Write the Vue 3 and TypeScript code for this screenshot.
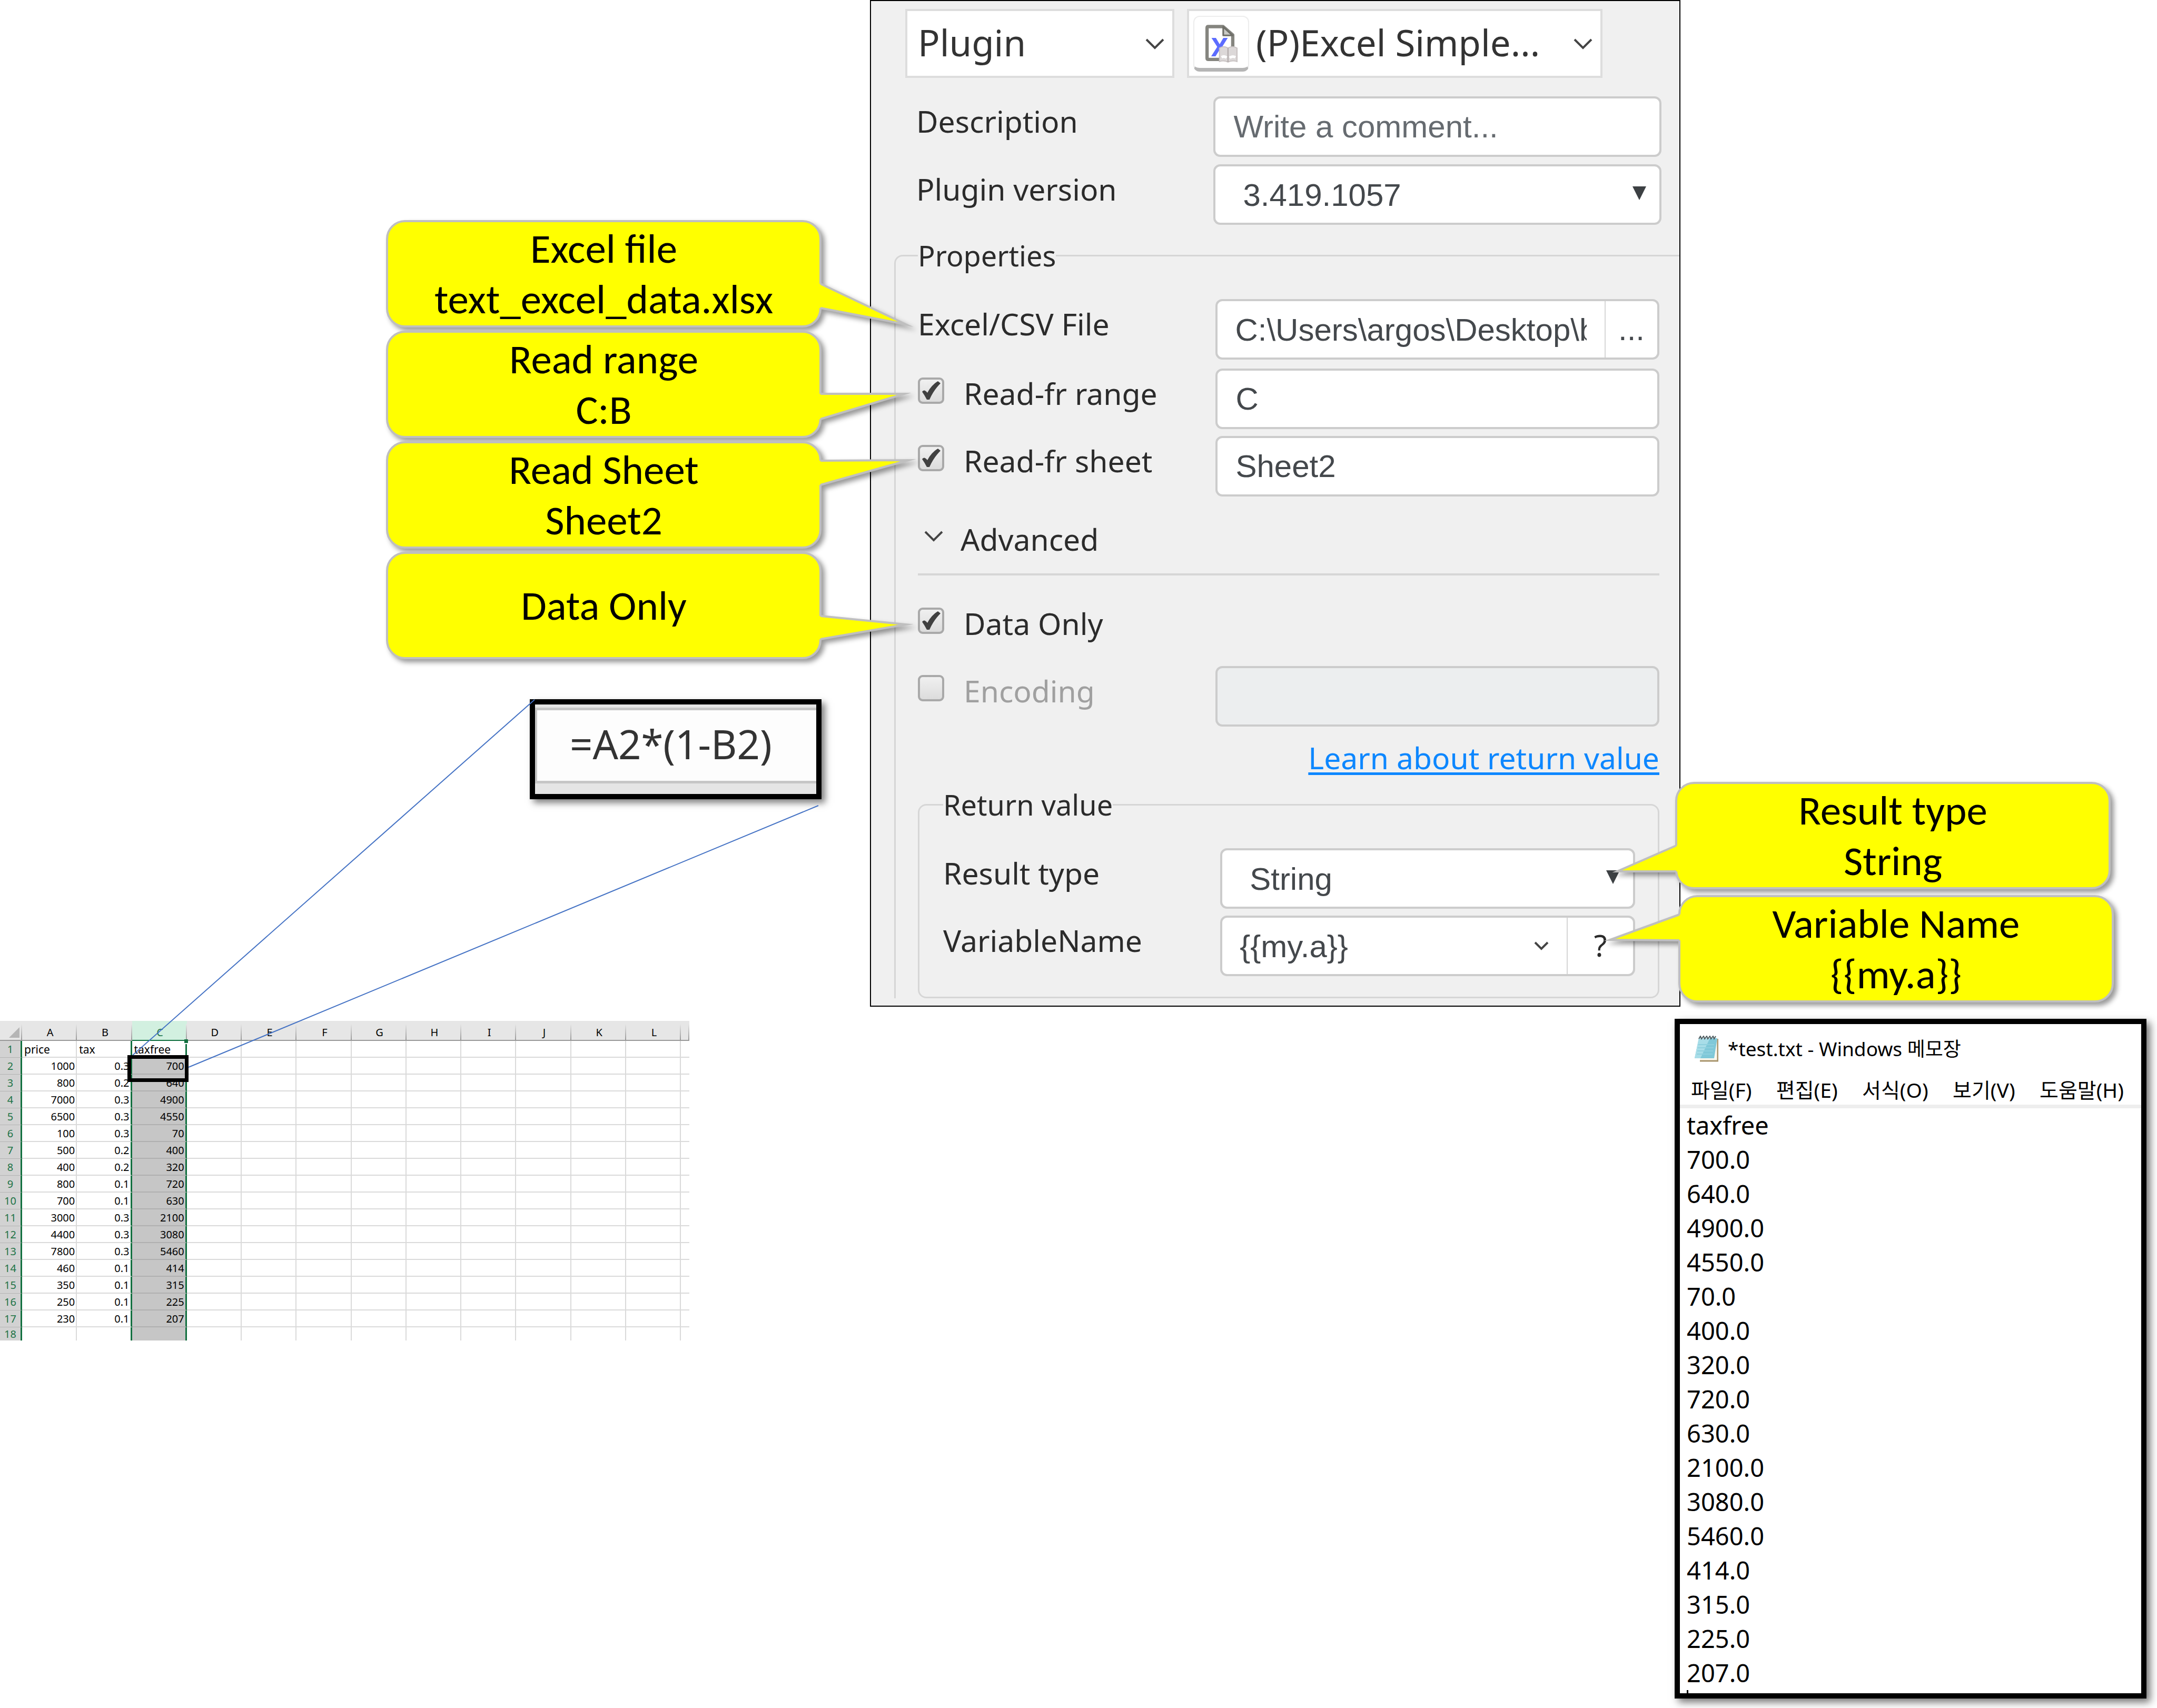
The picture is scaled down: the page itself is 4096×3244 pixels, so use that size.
<script setup lang="ts">
import { ref } from 'vue'

interface Tail {
  from: number
  to: number
  tipX: number
  tipY: number
}

interface Callout {
  lines: string[]
  tail: Tail
}

const leftCallouts: Callout[] = [
  { lines: ['Excel file', 'text_excel_data.xlsx'], tail: { from: 117, to: 163, tipX: 164, tipY: 194 } },
  { lines: ['Read range', 'C:B'], tail: { from: 116, to: 164, tipX: 161, tipY: 116 } },
  { lines: ['Read Sheet', 'Sheet2'], tail: { from: 33, to: 79, tipX: 169, tipY: 32 } },
  { lines: ['Data Only'], tail: { from: 118, to: 162, tipX: 164, tipY: 134 } },
]

const rightCallouts: Callout[] = [
  { lines: ['Result type', 'String'], tail: { from: 117, to: 166, tipX: -114, tipY: 166 } },
  { lines: ['Variable Name', '{{my.a}}'], tail: { from: 33, to: 82, tipX: -134, tipY: 81 } },
]

// The pointer starts on the middle of the body's 4px border.
function tailStroke(t: Tail): string {
  const edge = t.tipX > 0 ? 2 : -2
  return `M${edge} ${t.from} L${t.tipX} ${t.tipY} L${edge} ${t.to}`
}

function tailFill(t: Tail): string {
  const edge = t.tipX > 0 ? 2 : -2
  return `M0 ${t.from} L${edge} ${t.from} L${t.tipX} ${t.tipY} L${edge} ${t.to} L0 ${t.to} Z`
}

const description = ref('')
const filePath = ref('C:\\Users\\argos\\Desktop\\b')
const readRange = ref('C')
const readSheet = ref('Sheet2')
const useRange = ref(true)
const useSheet = ref(true)
const dataOnly = ref(true)
const useEncoding = ref(false)
const variable = ref('{{my.a}}')
const formula = ref('=A2*(1-B2)')

const columns = ['A', 'B', 'C', 'D', 'E', 'F', 'G', 'H', 'I', 'J', 'K', 'L', '']
const sheetRows: string[][] = [
  ['price', 'tax', 'taxfree'],
  ['1000', '0.3', '700'],
  ['800', '0.2', '640'],
  ['7000', '0.3', '4900'],
  ['6500', '0.3', '4550'],
  ['100', '0.3', '70'],
  ['500', '0.2', '400'],
  ['400', '0.2', '320'],
  ['800', '0.1', '720'],
  ['700', '0.1', '630'],
  ['3000', '0.3', '2100'],
  ['4400', '0.3', '3080'],
  ['7800', '0.3', '5460'],
  ['460', '0.1', '414'],
  ['350', '0.1', '315'],
  ['250', '0.1', '225'],
  ['230', '0.1', '207'],
  [],
]

const menus = ['파일(F)', '편집(E)', '서식(O)', '보기(V)', '도움말(H)']
const noteText = ref(
  sheetRows
    .filter((row) => row.length > 0)
    .map((row, i) => (i === 0 ? row[2] : `${row[2]}.0`))
    .join('\n'),
)
</script>

<template>
  <main class="page">
    <div class="upper">
      <section class="left-notes">
        <div v-for="c in leftCallouts" :key="c.lines[0]" class="callout">
          <span v-for="line in c.lines" :key="line">{{ line }}</span>
          <svg class="tail tail-right" width="1" height="1" aria-hidden="true">
            <path :d="tailFill(c.tail)" fill="#ffff00" />
            <path :d="tailStroke(c.tail)" fill="none" stroke="#bfbfbf" stroke-width="4" stroke-miterlimit="20" />
          </svg>
        </div>
        <div class="formula">
          <input v-model="formula" class="formula-input" aria-label="Formula" />
        </div>
      </section>

      <form class="panel" @submit.prevent>
        <div class="head">
          <div class="head-type">
            <select class="head-select" aria-label="Operation type">
              <option>Plugin</option>
            </select>
            <svg class="head-chevron" viewBox="0 0 36 22" aria-hidden="true"><path d="M2 3 L18 19 L34 3" /></svg>
          </div>
          <div class="head-plugin">
            <span class="plugin-icon">
              <svg viewBox="0 0 450 456" aria-hidden="true">
                <path d="M322 250 V152 L240 82 H116 Q106 82 106 94 V346 Q106 358 118 358 H215" fill="none" stroke="#85857f" stroke-width="28" stroke-linejoin="round" />
                <path d="M242 84 V156 H320 Z" fill="#c9c9c5" stroke="#6e6e68" stroke-width="14" stroke-linejoin="round" />
                <text x="140" y="332" font-family="'Noto Sans', sans-serif" font-weight="700" font-size="216" fill="#5c6cff">X</text>
                <path d="M210 262 Q245 240 282 262 Q320 240 358 262 V376 Q320 362 282 380 Q245 362 210 376 Z" fill="#dcd8d8" stroke="#c4bebe" stroke-width="8" />
                <path d="M282 262 V380" stroke="#b2acac" stroke-width="10" />
                <path d="M228 340 Q250 326 270 344 M296 344 Q320 326 344 340" fill="none" stroke="#ffffff" stroke-width="22" />
              </svg>
            </span>
            <select class="head-select" aria-label="Plugin">
              <option>(P)Excel Simple...</option>
            </select>
            <svg class="head-chevron" viewBox="0 0 36 22" aria-hidden="true"><path d="M2 3 L18 19 L34 3" /></svg>
          </div>
        </div>

        <div class="general">
          <div class="row">
            <label class="label" for="description">Description</label>
            <input id="description" v-model="description" class="field" placeholder="Write a comment..." />
          </div>
          <div class="row">
            <label class="label" for="version">Plugin version</label>
            <div class="select-wrap">
              <select id="version" class="field select">
                <option>3.419.1057</option>
              </select>
              <svg class="triangle" viewBox="0 0 26 26" aria-hidden="true"><path d="M0 0 H26 L13 26 Z" /></svg>
            </div>
          </div>
        </div>

        <fieldset class="properties">
          <legend>Properties</legend>
          <div class="row file-row">
            <label class="label" for="file">Excel/CSV File</label>
            <div class="group">
              <input id="file" v-model="filePath" class="group-input" />
              <button type="button" class="browse" aria-label="Browse">...</button>
            </div>
          </div>
          <div class="row">
            <label class="label check-label">
              <span class="check">
                <input v-model="useRange" type="checkbox" />
                <svg v-if="useRange" viewBox="0 0 50 50" aria-hidden="true"><path d="M8 27 Q12 21 18 29 Q26 14 38 7 L43 11 Q30 24 22 42 H17 Q13 34 8 27 Z" /></svg>
              </span>
              Read-fr range
            </label>
            <input v-model="readRange" class="field" aria-label="Range" />
          </div>
          <div class="row">
            <label class="label check-label">
              <span class="check">
                <input v-model="useSheet" type="checkbox" />
                <svg v-if="useSheet" viewBox="0 0 50 50" aria-hidden="true"><path d="M8 27 Q12 21 18 29 Q26 14 38 7 L43 11 Q30 24 22 42 H17 Q13 34 8 27 Z" /></svg>
              </span>
              Read-fr sheet
            </label>
            <input v-model="readSheet" class="field" aria-label="Sheet" />
          </div>

          <button type="button" class="advanced">
            <svg viewBox="0 0 36 22" aria-hidden="true"><path d="M2 2 L18 18 L34 2" /></svg>
            Advanced
          </button>

          <div class="row">
            <label class="label check-label">
              <span class="check">
                <input v-model="dataOnly" type="checkbox" />
                <svg v-if="dataOnly" viewBox="0 0 50 50" aria-hidden="true"><path d="M8 27 Q12 21 18 29 Q26 14 38 7 L43 11 Q30 24 22 42 H17 Q13 34 8 27 Z" /></svg>
              </span>
              Data Only
            </label>
          </div>
          <div class="row">
            <label class="label check-label muted">
              <span class="check"><input v-model="useEncoding" type="checkbox" /></span>
              Encoding
            </label>
            <input class="field" aria-label="Encoding" disabled />
          </div>

          <div class="learn"><a href="#return-value">Learn about return value</a></div>

          <fieldset id="return-value" class="return">
            <legend>Return value</legend>
            <div class="row return-row">
              <label class="label" for="result">Result type</label>
              <div class="select-wrap">
                <select id="result" class="field select">
                  <option>String</option>
                </select>
                <svg class="triangle" viewBox="0 0 26 26" aria-hidden="true"><path d="M0 0 H26 L13 26 Z" /></svg>
              </div>
            </div>
            <div class="row return-row">
              <label class="label" for="variable">VariableName</label>
              <div class="group">
                <input id="variable" v-model="variable" class="group-input" />
                <svg class="small-chevron" viewBox="0 0 28 18" aria-hidden="true"><path d="M2 2 L14 14 L26 2" /></svg>
                <button type="button" class="help" aria-label="Help">?</button>
              </div>
            </div>
          </fieldset>
        </fieldset>
      </form>

      <section class="right-notes">
        <div v-for="c in rightCallouts" :key="c.lines[0]" class="callout">
          <span v-for="line in c.lines" :key="line">{{ line }}</span>
          <svg class="tail tail-left" width="1" height="1" aria-hidden="true">
            <path :d="tailFill(c.tail)" fill="#ffff00" />
            <path :d="tailStroke(c.tail)" fill="none" stroke="#bfbfbf" stroke-width="4" stroke-miterlimit="20" />
          </svg>
        </div>
      </section>
    </div>

    <div class="lower">
      <table class="sheet">
        <colgroup>
          <col class="col-index" />
          <col v-for="n in 12" :key="n" />
          <col class="col-rest" />
        </colgroup>
        <thead>
          <tr>
            <th class="corner"><svg viewBox="0 0 20 20" aria-hidden="true"><path d="M20 0 V20 H0 Z" /></svg></th>
            <th v-for="name in columns" :key="name" :class="{ picked: name === 'C' }">{{ name }}</th>
          </tr>
        </thead>
        <tbody>
          <tr v-for="(row, r) in sheetRows" :key="r">
            <th>{{ r + 1 }}</th>
            <td v-for="(name, c) in columns" :key="name" :class="{ picked: name === 'C' }">
              {{ row[c] ?? '' }}
              <span v-if="r === 0 && c === 2" class="handle"></span>
              <span v-if="r === 1 && c === 2" class="focus-box"></span>
            </td>
          </tr>
        </tbody>
      </table>

      <section class="notepad">
        <header class="title">
          <svg viewBox="0 0 46 50" aria-hidden="true">
            <path d="M12 6 H46 V48 H11 V42 Z" fill="#fbf8ee" />
            <path d="M45 6 V48 H11" fill="none" stroke="#a8946c" stroke-width="3" />
            <path d="M9 5 H44 L38 43 H1 Z" fill="#7fc8d8" />
            <path d="M9 5 H30 L12 43 H1 Z" fill="#a8dde8" />
            <path d="M8 17 H38 M7 23 H37 M6 29 H36 M5 35 H35" stroke="#8fd0de" stroke-width="2" />
            <path d="M9 6 L12 1 L14 6 L18 1 L20 6 L24 1 L26 6 L30 1 L32 6 L36 1 L38 6 L41 1" fill="none" stroke="#4c5a5e" stroke-width="2" />
          </svg>
          <h2>*test.txt - Windows 메모장</h2>
        </header>
        <nav class="menu">
          <button v-for="m in menus" :key="m" type="button">{{ m }}</button>
        </nav>
        <textarea v-model="noteText" rows="17" aria-label="Text" spellcheck="false"></textarea>
        <span class="caret"></span>
      </section>
    </div>

    <svg class="lines" viewBox="0 0 4096 3244" preserveAspectRatio="none" aria-hidden="true">
      <path d="M1015 1329 L252 2004 M1554 1530 L358 2027" fill="none" stroke="#4472c4" stroke-width="2" />
    </svg>
  </main>
</template>

<style>
body {
  margin: 0;
  background: #ffffff;
}
</style>

<style scoped>
.page {
  position: relative;
  min-height: 100vh;
  box-sizing: border-box;
  overflow: hidden;
  background: #ffffff;
  font-family: 'Noto Sans', 'Noto Sans CJK KR', sans-serif;
  color: #000000;
}

.page *,
.page *::before {
  box-sizing: border-box;
}

button,
input,
select,
textarea {
  margin: 0;
  padding: 0;
  border: 0;
  border-radius: 0;
  outline: 0;
  background: transparent;
  color: inherit;
  font: inherit;
  appearance: none;
}

.upper {
  display: grid;
  grid-template-columns:
    minmax(0, 733fr) minmax(0, 827fr) minmax(0, 92fr) minmax(0, 1539fr)
    minmax(0, 827fr) minmax(0, 78fr);
}

/* callouts */
.left-notes {
  grid-column: 2;
  z-index: 2;
  display: flex;
  flex-direction: column;
  gap: 6px;
  padding-top: 418px;
}

.right-notes {
  grid-column: 5;
  z-index: 2;
  display: flex;
  flex-direction: column;
  gap: 11px;
  padding-top: 1485px;
}

.right-notes .callout {
  margin: 0 10px 0 -10px;
}

.right-notes .callout + .callout {
  margin: 0 4px 0 -4px;
}

.callout {
  position: relative;
  display: flex;
  flex-direction: column;
  align-items: center;
  justify-content: center;
  min-height: 204px;
  border: 4px solid #bfbfbf;
  border-radius: 36px;
  background: #ffff00;
  font-family: Carlito, Lato, sans-serif;
  font-size: 79px;
  line-height: 96px;
  white-space: nowrap;
  filter: drop-shadow(6px 6px 5px rgba(0, 0, 0, 0.4));
}

.tail {
  position: absolute;
  top: 0;
  overflow: visible;
}

.tail-right {
  left: 100%;
}

.tail-left {
  left: 0;
}

.formula {
  align-self: flex-end;
  width: 67%;
  margin-top: 70px;
  padding: 6px 0 20px;
  border: 10px solid #000000;
  background: #e5e5e5;
  box-shadow: 7px 7px 12px rgba(0, 0, 0, 0.5);
}

.formula-input {
  display: block;
  width: 100%;
  height: 144px;
  padding: 0 0 8px 62px;
  border: solid #c6c6c6;
  border-width: 5px 0 5px 4px;
  background: #fdfdfd;
  color: #333333;
  font-size: 76px;
}

/* properties panel */
.panel {
  grid-column: 4;
  padding-bottom: 14px;
  border: 2px solid #000000;
  background: #f0f0f0;
  color: #2b2b2b;
  font-size: 57px;
}

.head {
  display: grid;
  grid-template-columns: minmax(0, 511fr) minmax(0, 789fr);
  gap: 24px;
  padding: 15px 146px 35px 65px;
}

.head-type,
.head-plugin {
  position: relative;
  display: flex;
  align-items: center;
  height: 131px;
  border: 4px solid #dddddd;
  background: #ffffff;
  color: #333333;
}

.head-plugin {
  padding-left: 8px;
}

.head-select {
  flex: 1;
  min-width: 0;
  height: 123px;
  padding: 0 0 6px 20px;
  font-size: 69px;
}

.head-plugin .head-select {
  padding-left: 13px;
}

.head-chevron {
  position: absolute;
  top: 51px;
  right: 15px;
  width: 36px;
  height: 22px;
}

.head-chevron path,
.advanced path,
.small-chevron path {
  fill: none;
  stroke: #444444;
  stroke-width: 4;
}

.plugin-icon {
  width: 106px;
  height: 106px;
  border: 2px solid #ededed;
  border-bottom: 7px solid #b5b5b5;
  border-radius: 12px;
  background: #ffffff;
}

.plugin-icon svg {
  display: block;
  width: 102px;
  height: 103px;
}

.general {
  display: flex;
  flex-direction: column;
  gap: 14px;
  padding: 0 34px 0 86px;
}

.row {
  display: grid;
  grid-template-columns: minmax(0, 565fr) minmax(0, 842fr);
  align-items: start;
  min-height: 115px;
}

.general .row {
  grid-template-columns: minmax(0, 564fr) minmax(0, 850fr);
}

.return .row {
  grid-template-columns: minmax(0, 525fr) minmax(0, 786fr);
}

.label {
  line-height: 94px;
  white-space: nowrap;
}

.field,
.group {
  width: 100%;
  height: 115px;
  border: 4px solid #cccccc;
  border-radius: 13px;
  background: #ffffff;
  color: #44484c;
  font-family: 'Liberation Sans', Arial, sans-serif;
  font-size: 60px;
}

.field {
  padding: 0 34px;
}

.field::placeholder {
  color: #666b70;
  opacity: 1;
}

.field:disabled {
  background: #eceeef;
}

.select-wrap {
  position: relative;
}

.select {
  padding: 2px 52px 0;
}

.triangle {
  position: absolute;
  top: 42px;
  right: 29px;
  width: 26px;
  height: 26px;
  fill: #3c4043;
}

.group {
  display: flex;
  align-items: center;
}

.group-input {
  flex: 1;
  min-width: 0;
  height: 107px;
  margin-right: 34px;
  padding: 2px 0 0 33px;
}

.browse {
  width: 100px;
  height: 107px;
  border-left: 2px solid #d6d6d6;
}

.help {
  width: 126px;
  height: 107px;
  padding-bottom: 4px;
  border-left: 2px solid #d6d6d6;
  color: #2b2b2b;
  font-family: 'Noto Sans', sans-serif;
  font-size: 57px;
}

.small-chevron {
  width: 28px;
  height: 18px;
  margin-right: 34px;
}

fieldset {
  min-width: 0;
  margin: 0;
  border: 3px solid #d6d6d6;
  border-radius: 16px;
}

legend {
  padding: 0;
  font-size: 54px;
  line-height: 76px;
}

.properties {
  margin: 20px 0 0 44px;
  padding: 45px 38px 0 42px;
  border-right: 0;
  border-bottom: 0;
  border-radius: 16px 0 0 0;
}

.properties .row {
  margin-bottom: 13px;
}

.properties .file-row {
  margin-bottom: 17px;
}

.check-label {
  display: flex;
  align-items: flex-start;
  gap: 37px;
}

.check {
  position: relative;
  width: 50px;
  height: 50px;
  margin-top: 17px;
}

.check input {
  display: block;
  width: 50px;
  height: 50px;
  border: 4px solid #a9a9a9;
  border-radius: 9px;
  background: linear-gradient(#f0f0f0, #dcdcdc);
}

.check svg {
  position: absolute;
  inset: 0;
  fill: #404040;
  pointer-events: none;
}

.muted {
  color: #a0a0a0;
}

.advanced {
  display: flex;
  align-items: center;
  gap: 33px;
  width: 100%;
  margin: -13px 0 44px;
  padding: 43px 12px 27px;
  border-bottom: 4px solid #d6d6d6;
  line-height: 76px;
}

.advanced svg {
  width: 36px;
  height: 22px;
  margin-bottom: 10px;
}

.learn {
  margin-top: 21px;
  line-height: 76px;
  text-align: right;
}

.learn a {
  color: #0d87ff;
  text-decoration-thickness: 5px;
  text-underline-offset: 6px;
}

.return {
  margin-top: 13px;
  padding: 45px 43px 26px 45px;
}

/* spreadsheet */
.lower {
  display: grid;
  grid-template-columns: minmax(0, 1309fr) minmax(0, 1871fr) minmax(0, 896fr) minmax(0, 20fr);
  align-items: start;
  padding: 23px 0 18px;
}

.sheet {
  width: 100%;
  margin-top: 4px;
  table-layout: fixed;
  border-collapse: separate;
  border-spacing: 0;
  font-size: 20px;
  line-height: 24px;
}

.col-index {
  width: 42px;
}

.col-rest {
  width: 16px;
}

.sheet th,
.sheet td {
  height: 32px;
  padding: 1px 2px 0 4px;
  font-weight: 400;
  white-space: nowrap;
}

.sheet thead th {
  height: 38px;
  padding-top: 7px;
  border-bottom: 2px solid #999999;
  background: linear-gradient(#e6e6e6, #999999) right bottom / 2px 30px no-repeat #e6e6e6;
}

.sheet thead .corner {
  padding: 8px 5px 0 0;
  text-align: right;
}

.corner svg {
  display: block;
  width: 20px;
  height: 20px;
  margin-left: auto;
  fill: #b5b5b5;
}

.sheet thead .picked {
  border-bottom-color: #127040;
  background-color: #d2f0e0;
  color: #217346;
}

.sheet tbody th {
  padding: 1px 0 0;
  border-right: 3px solid #127040;
  border-bottom: 1px solid #b4b4b4;
  background: #d2d2d2;
  color: #217346;
}

.sheet td {
  border-right: 2px solid #dadada;
  border-bottom: 2px solid #dadada;
  text-align: right;
}

.sheet td:last-child {
  padding: 0;
  border-right: 0;
}

.sheet td:nth-child(3) {
  border-right: 3px solid #127040;
}

.sheet tbody tr:first-child td {
  font-size: 21px;
  text-align: left;
}

.sheet tbody tr:last-child > * {
  height: 25px;
  border-bottom: 0;
}

.sheet td.picked {
  position: relative;
  border-right: 3px solid #127040;
  border-bottom-color: #b0b0b0;
  background: #c6c6c6;
}

.sheet tbody tr:first-child .picked {
  background: #ffffff;
}

.handle {
  position: absolute;
  top: -3px;
  right: -5px;
  width: 7px;
  height: 9px;
  border-bottom: 2px solid #ffffff;
  background: #127040;
}

.focus-box {
  position: absolute;
  z-index: 1;
  inset: -5px -6px -16px -9px;
  border: 7px solid #000000;
}

/* notepad */
.notepad {
  grid-column: 3;
  border: 10px solid #000000;
  background: #ffffff;
  box-shadow: 7px 7px 14px rgba(0, 0, 0, 0.55);
}

.title {
  display: flex;
  align-items: center;
  gap: 18px;
  padding: 21px 0 0 27px;
}

.title svg {
  width: 46px;
  height: 50px;
}

.title h2 {
  margin: 0;
  font-size: 37px;
  font-weight: 400;
  line-height: 52px;
}

.menu {
  display: flex;
  justify-content: space-between;
  margin-top: 26px;
  padding: 0 33px 2px 21px;
  border-bottom: 7px solid #eeeeee;
}

.menu button {
  font-size: 39px;
  line-height: 52px;
}

.notepad textarea {
  display: block;
  width: 100%;
  height: 1105px;
  padding-left: 13px;
  overflow: hidden;
  resize: none;
  font-size: 47px;
  line-height: 65px;
}

.caret {
  display: block;
  width: 3px;
  height: 6px;
  margin-left: 13px;
  background: #000000;
}

.lines {
  position: absolute;
  z-index: 3;
  inset: 0;
  width: 100%;
  height: 100%;
  pointer-events: none;
}
</style>
